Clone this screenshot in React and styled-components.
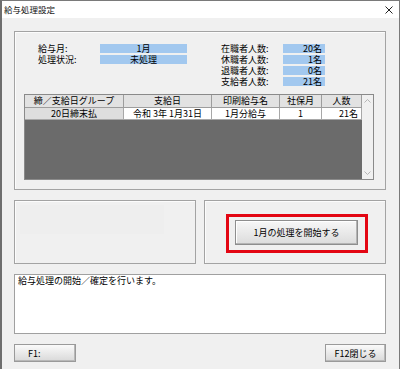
import styled, { createGlobalStyle } from 'styled-components';

const GlobalStyle = createGlobalStyle`
  html, body {
    margin: 0;
    padding: 0;
    background: #ffffff;
  }
  body {
    font-family: "Noto Sans CJK JP", "Noto Sans", sans-serif;
    font-size: 9px;
    color: #000;
  }
`;

const staff = [
  { label: '在職者人数:', value: '20名' },
  { label: '休職者人数:', value: '1名' },
  { label: '退職者人数:', value: '0名' },
  { label: '支給者人数:', value: '21名' },
];

const columns = [
  { title: '締／支給日グループ', width: 99 },
  { title: '支給日', width: 88 },
  { title: '印刷給与名', width: 68 },
  { title: '社保月', width: 42 },
  { title: '人数', width: 40 },
];

const rows = [
  ['20日締末払', '令和 3年 1月31日', '1月分給与', '1', '21名'],
];

const App = () => {
  return (
    <>
      <GlobalStyle />
      <Window>
        <TitleBar>
          <span>給与処理設定</span>
          <svg width="8" height="8" viewBox="0 0 8 8">
            <path d="M0.5 0.5 L7.5 7.5 M7.5 0.5 L0.5 7.5" stroke="#222" strokeWidth="1" />
          </svg>
        </TitleBar>

        <Body>
          <GroupBox $height={159} $pad="11px 9px">
            <Info>
              <InfoCol>
                <InfoRow>
                  <Label $w={62}>給与月:</Label>
                  <Field $w={87} $align="center">1月</Field>
                </InfoRow>
                <InfoRow>
                  <Label $w={62}>処理状況:</Label>
                  <Field $w={87} $align="center">未処理</Field>
                </InfoRow>
              </InfoCol>
              <InfoCol>
                {staff.map(s => (
                  <InfoRow key={s.label}>
                    <Label $w={62}>{s.label}</Label>
                    <Field $w={42} $align="right">{s.value}</Field>
                  </InfoRow>
                ))}
              </InfoCol>
            </Info>

            <Grid>
              <Table>
                <HeadRow>
                  {columns.map(c => (
                    <HeadCell key={c.title} $w={c.width}>{c.title}</HeadCell>
                  ))}
                </HeadRow>
                {rows.map(r => (
                  <DataRow key={r[0]}>
                    {r.map((v, i) => (
                      <DataCell
                        key={i}
                        $w={columns[i].width}
                        $fixed={i === 0}
                        $align={i === 4 ? 'right' : 'center'}
                      >
                        {v}
                      </DataCell>
                    ))}
                  </DataRow>
                ))}
              </Table>
              <ScrollBar>
                <svg width="7" height="4" viewBox="0 0 7 4">
                  <path d="M0.5 3.5 L3.5 0.5 L6.5 3.5" fill="none" stroke="#b5b5b5" strokeWidth="1" />
                </svg>
                <svg width="7" height="4" viewBox="0 0 7 4">
                  <path d="M0.5 0.5 L3.5 3.5 L6.5 0.5" fill="none" stroke="#b5b5b5" strokeWidth="1" />
                </svg>
              </ScrollBar>
            </Grid>
          </GroupBox>

          <BoxRow>
            <GroupBox $height={64} $pad="4px 0 0 5px" $w={182}>
              <FaintPanel />
            </GroupBox>
            <GroupBox $height={64} $pad="13px 0 0 21px" $w={182}>
              <Highlight>
                <StartButton>1月の処理を開始する</StartButton>
              </Highlight>
            </GroupBox>
          </BoxRow>

          <Message>給与処理の開始／確定を行います。</Message>

          <Footer>
            <FnButton $w={62} $align="flex-start">F1:</FnButton>
            <FnButton $w={61} $align="center">F12閉じる</FnButton>
          </Footer>
        </Body>
      </Window>
    </>
  );
};

export default App;

const Window = styled.div`
  width: 400px;
  height: 369px;
  box-sizing: border-box;
  border: 1px solid #7a7a7a;
  border-left: 2px solid #6e6e6e;
  border-bottom: none;
  background: #f0f0f0;
  overflow: hidden;
`;

const TitleBar = styled.div`
  height: 17px;
  background: #fff;
  display: flex;
  align-items: center;
  justify-content: space-between;
  padding: 0 6px 0 2px;
  font-size: 8.5px;
  line-height: 17px;
  color: #111;
`;

const Body = styled.div`
  padding: 13px 0 0 12px;
`;

const GroupBox = styled.div`
  box-sizing: border-box;
  width: ${p => (p.$w ? `${p.$w}px` : '372px')};
  height: ${p => p.$height}px;
  padding: ${p => p.$pad};
  border: 1px solid #a3a3a3;
  box-shadow: inset 1px 1px 0 #fcfcfc;
`;

const Info = styled.div`
  display: flex;
  gap: 34px;
  margin-left: 14px;
  height: 44px;
`;

const InfoCol = styled.div`
  display: flex;
  flex-direction: column;
`;

const InfoRow = styled.div`
  display: flex;
  align-items: center;
  height: 11px;
`;

const Label = styled.div`
  width: ${p => p.$w}px;
  line-height: 11px;
  white-space: nowrap;
`;

const Field = styled.div`
  width: ${p => p.$w}px;
  height: 9px;
  line-height: 9px;
  background: #a2c8ef;
  text-align: ${p => p.$align};
  box-sizing: border-box;
  padding: 0 3px;
  white-space: nowrap;
`;

const Grid = styled.div`
  margin-top: 7px;
  width: 350px;
  height: 86px;
  box-sizing: border-box;
  border: 1px solid #8a8a8a;
  display: flex;
`;

const Table = styled.div`
  width: 337px;
  background: #6b6b6b;
  display: flex;
  flex-direction: column;
`;

const HeadRow = styled.div`
  display: flex;
  height: 13px;
`;

const HeadCell = styled.div`
  width: ${p => p.$w}px;
  box-sizing: border-box;
  background: #e2e2e2;
  border-right: 1px solid #9d9d9d;
  border-bottom: 1px solid #9d9d9d;
  text-align: center;
  line-height: 12px;
  white-space: nowrap;
`;

const DataRow = styled.div`
  display: flex;
  height: 12px;
`;

const DataCell = styled.div`
  width: ${p => p.$w}px;
  box-sizing: border-box;
  background: ${p => (p.$fixed ? '#dedede' : '#ffffff')};
  border-right: 1px solid #a8a8a8;
  border-bottom: 1px solid #a8a8a8;
  text-align: ${p => p.$align};
  padding: 0 3px;
  line-height: 11px;
  white-space: nowrap;
`;

const ScrollBar = styled.div`
  flex: 1;
  background: #f0f0f0;
  display: flex;
  flex-direction: column;
  justify-content: space-between;
  align-items: center;
  padding: 4px 0 4px;
`;

const BoxRow = styled.div`
  display: flex;
  gap: 8px;
  margin-top: 10px;
`;

const FaintPanel = styled.div`
  width: 144px;
  height: 29px;
  background: #eeeeee;
`;

const Highlight = styled.div`
  width: 142px;
  height: 39px;
  box-sizing: border-box;
  border: 3px solid #e30613;
  padding: 3px 7px 5px 6px;
`;

const StartButton = styled.div`
  width: 123px;
  height: 25px;
  box-sizing: border-box;
  border: 1px solid #8e8e8e;
  background: linear-gradient(#f7f7f7, #dcdcdc);
  box-shadow: inset -1px -1px 0 #b4b4b4, inset 1px 1px 0 #ffffff;
  display: flex;
  align-items: center;
  justify-content: center;
  white-space: nowrap;
`;

const Message = styled.div`
  margin-top: 10px;
  width: 372px;
  height: 60px;
  box-sizing: border-box;
  background: #fff;
  border: 1px solid #a0a0a0;
  padding: 0 3px;
  line-height: 11px;
`;

const Footer = styled.div`
  margin-top: 10px;
  width: 372px;
  display: flex;
  justify-content: space-between;
`;

const FnButton = styled.div`
  width: ${p => p.$w}px;
  height: 18px;
  box-sizing: border-box;
  border: 1px solid #9a9a9a;
  background: linear-gradient(#fafafa, #d9d9d9);
  box-shadow: inset -1px -1px 0 #b8b8b8;
  display: flex;
  align-items: center;
  justify-content: ${p => p.$align};
  padding: ${p => (p.$align === 'flex-start' ? '0 0 0 13px' : '0')};
  white-space: nowrap;
`;
